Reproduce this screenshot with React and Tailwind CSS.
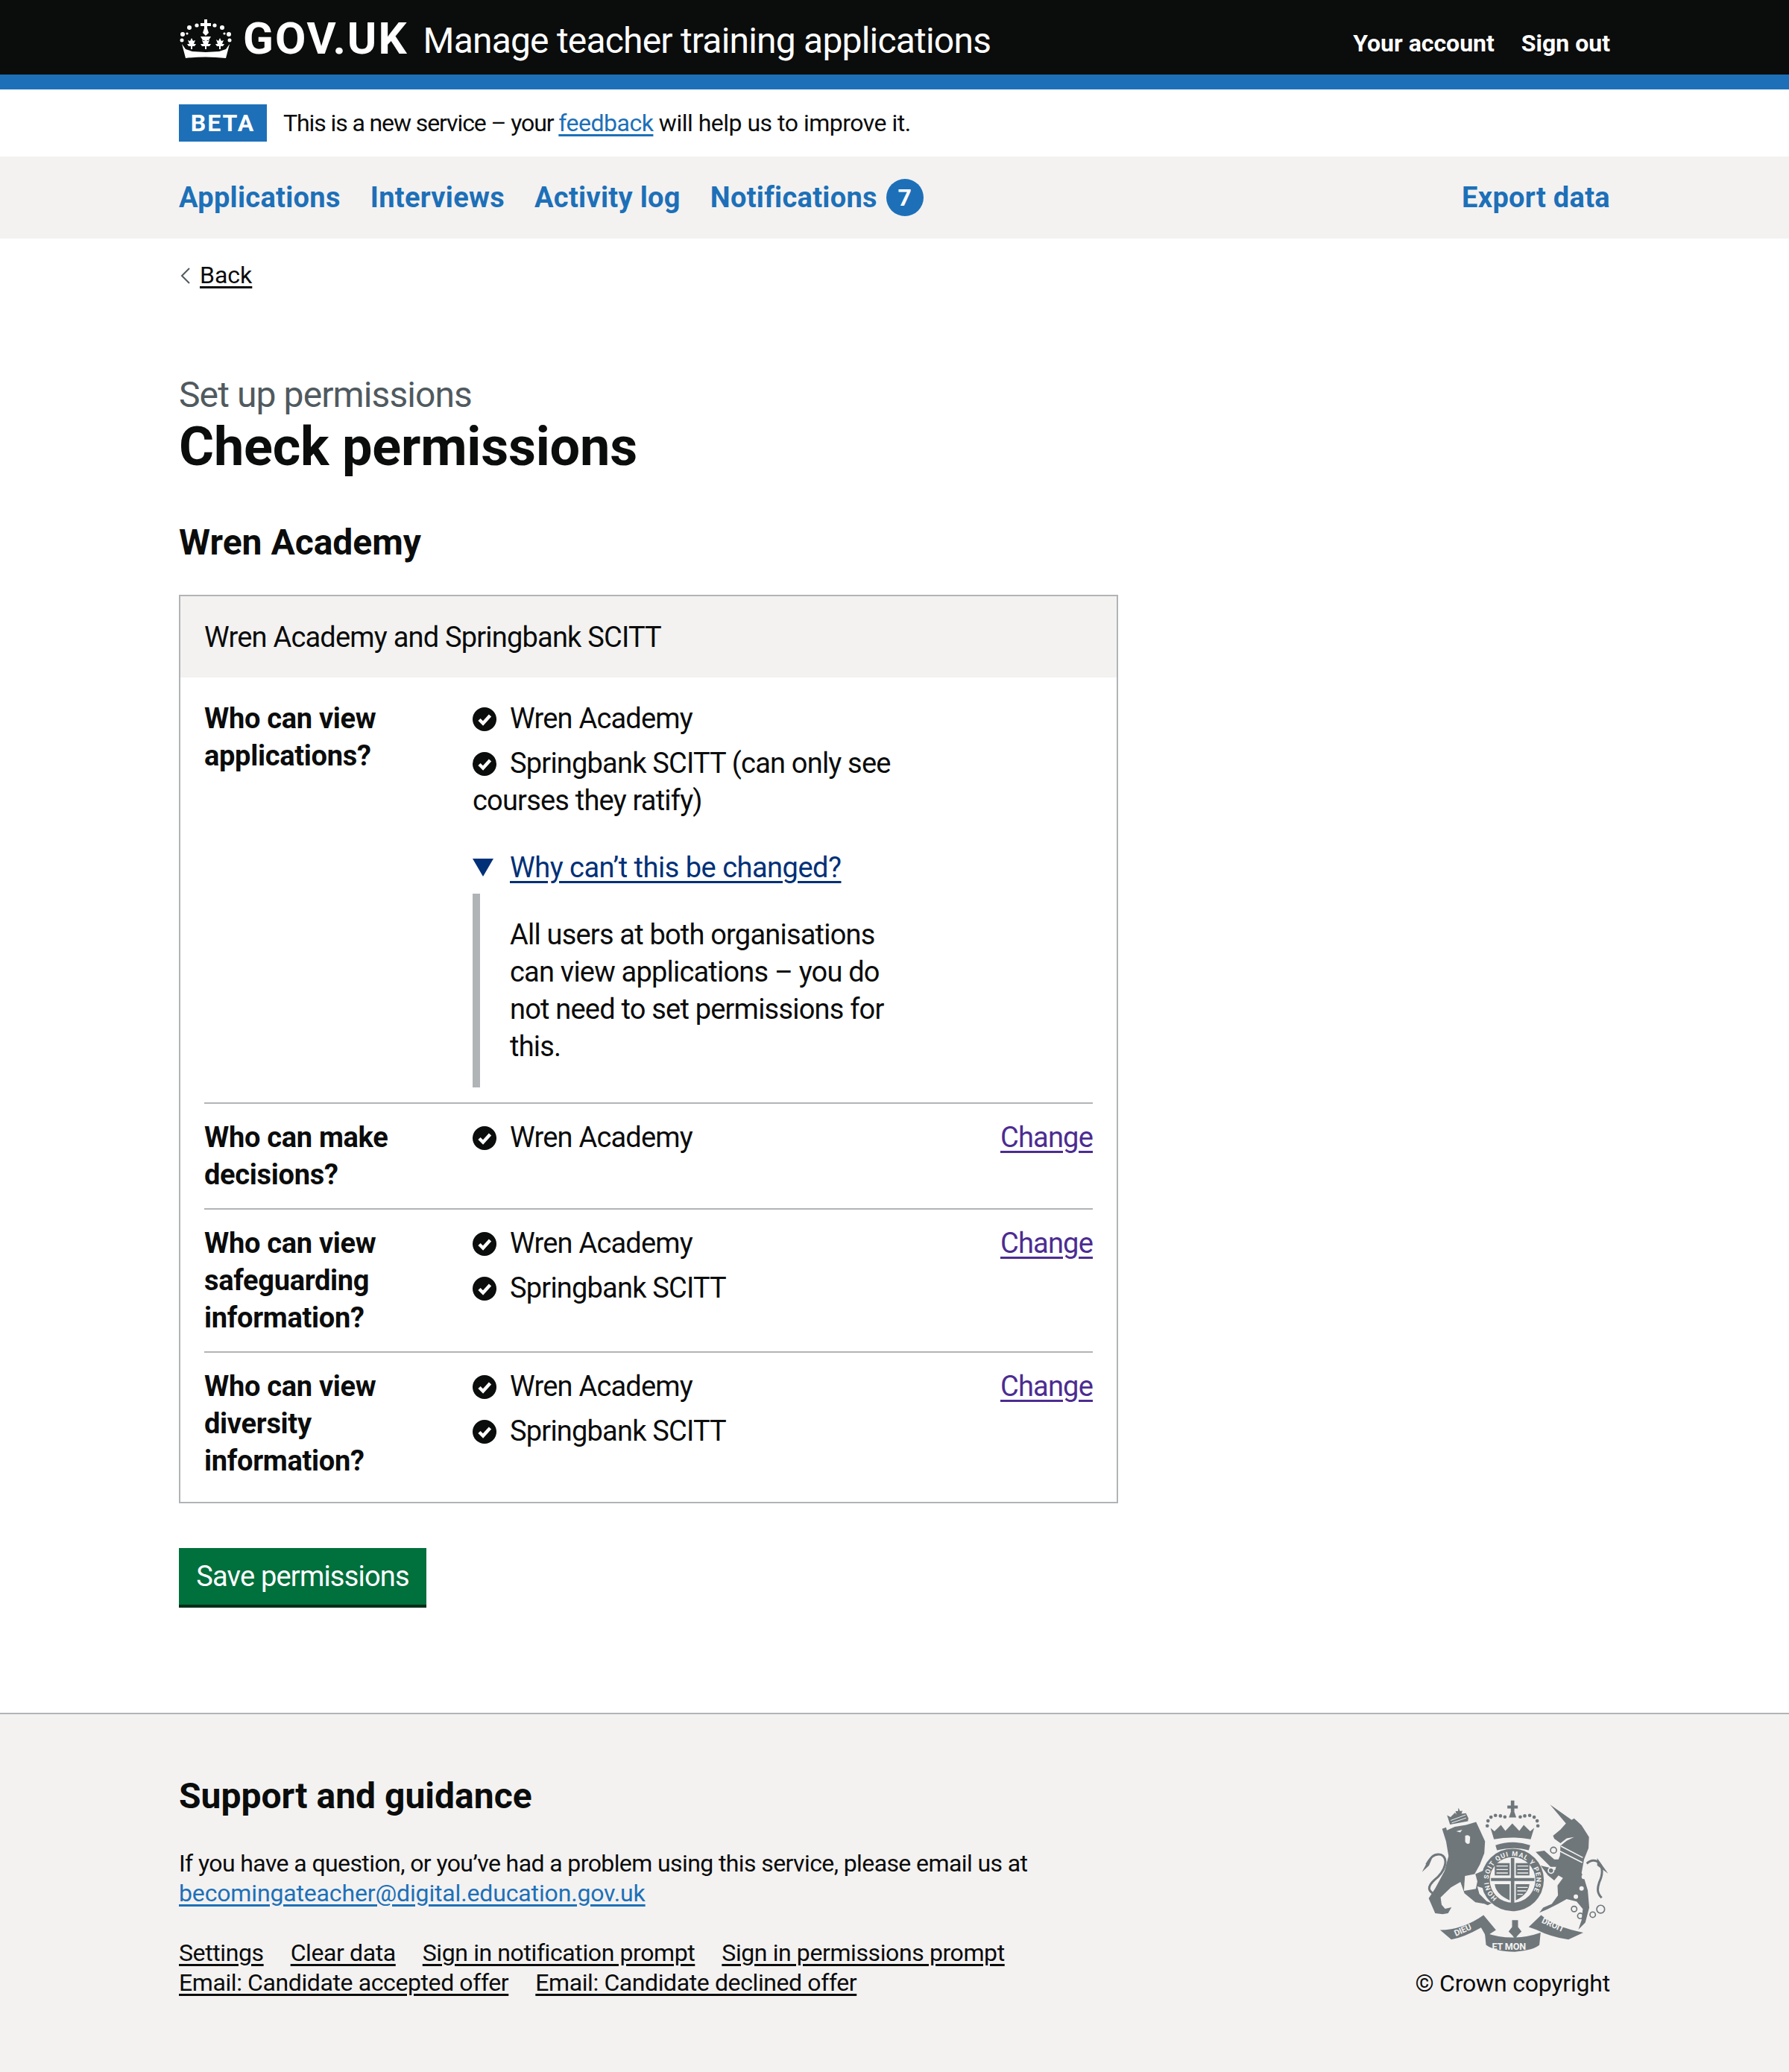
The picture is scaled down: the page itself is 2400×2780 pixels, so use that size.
import React from 'react';

const font = { fontFamily: 'Roboto, sans-serif' };

const Crown = () => (
  <svg viewBox="0 0 72 52" className="w-[72px] h-[52px] fill-white">
    <path d="M34 0h4v5h5v4h-5v3l2 6-4 4-4-4 2-6V9h-5V5h5z" />
    <circle cx="24" cy="8" r="2.6" /><circle cx="48" cy="8" r="2.6" />
    <circle cx="14" cy="11" r="3" /><circle cx="58" cy="11" r="3" />
    <circle cx="5" cy="20" r="3" /><circle cx="67" cy="20" r="3" />
    <circle cx="4" cy="28" r="2.5" /><circle cx="68" cy="28" r="2.5" />
    <circle cx="11" cy="19" r="1.6" /><circle cx="61" cy="19" r="1.6" />
    <path d="M29 23h14l-3 5h-8z" />
    <path d="M36 25l2 4 3-1-2 5h4l-2 3h-4v4h-2v-4h-4l-2-3h4l-2-5 3 1z" />
    <path d="M17 25l2 4 3-1-2 5h3l-2 3h-3v4h-2v-4h-3l-2-3h3l-2-5 3 1z" />
    <path d="M55 25l2 4 3-1-2 5h3l-2 3h-3v4h-2v-4h-3l-2-3h3l-2-6 3 2z" />
    <path d="M4 33l5 7 9 3 18 1 18-1 9-3 5-7-5 19q-27-3-54 0z" />
  </svg>
);

const RoyalArms = () => (
  <svg viewBox="130 100 760 630" className="w-[253px] h-[210px] fill-[#6f777b]">
    {/* lion */}
    <path d="M232 228l32-14 46-8 40-12 14 30 22 48-3 48-18 46-22 40 36-16 26 30 14 32-12 6-14-12-10 16-28-8 8 30 30 30 20 8-16 8-14-6-36-6-44-36-16-46-38 22-42 40 4 30 14 16 26-6-14 24-22 4-30-4-26-60 26-40 38-70 16-60-10-60-16-50 16-6z" />
    <path d="M305 412l42-8 8 30-6 30-48 8z" className="fill-[#f3f2f1]" />
    <path d="M196 490c-44-14-44-34-14-62 46-36 58-88 26-102-30-6-42 14-58 40" fill="none" stroke="#6f777b" strokeWidth="9" />
    <path d="M132 396l18-34 22-20-12 28z" />
    <path d="M306 250q12-6 20 4l-2 26q-12 8-18-6z" className="fill-[#f3f2f1]" />
    <path d="M270 232l24-6-8 10z" className="fill-[#f3f2f1]" />
    <path d="M245 205l-12-38 14 8 18-18 6 8-4-14 10 0 2-14 6 14 10-2-4 12 18-2 10 20 -2 12z" />
    <path d="M248 188l60-22M252 198l58-20" fill="none" stroke="#f3f2f1" strokeWidth="3" />
    {/* crown */}
    <path d="M490 108h14v20h14v12h-14v14l8 22h-30l8-22v-14h-14v-12h14z" />
    <path d="M422 264l-14-46 16 14 26-26 18 24 28-30 28 30 18-24 26 26 16-14-14 46q-74-14-148 0z" />
    <path d="M428 288q70-24 140 0l-6 20q-64-16-128 0z" />
    {[[395, 210], [398, 190], [410, 175], [428, 168], [448, 170], [466, 174], [528, 174], [546, 170], [566, 168], [584, 175], [596, 190], [599, 210]].map(([x, y]) => (
      <circle key={x} cx={x} cy={y} r="7" />
    ))}
    {/* garter and shield */}
    <circle cx="497" cy="428" r="126" />
    <circle cx="497" cy="428" r="92" className="fill-[#f3f2f1]" />
    <path d="M490 340h14v195h-14zM410 420h175v12H410z" />
    <path d="M425 360h60v50h-60zM510 360h55v50h-55zM425 445q4 40 60 65v-65zM510 445h55q-4 40-55 65z" />
    <path d="M432 372h46M432 386h46M432 400h46M516 372h44M516 386h44M516 400h44M516 458h42M516 472h36M516 486h22" fill="none" stroke="#f3f2f1" strokeWidth="4" />
    <defs>
      <path id="garterRing" d="M435 501a96 96 0 1 1 124 0" />
    </defs>
    <text className="fill-[#f3f2f1]" style={{ font: '700 27px Roboto, sans-serif' }}>
      <textPath href="#garterRing" textLength="430" lengthAdjust="spacing">HONI SOIT QUI MAL Y PENSE</textPath>
    </text>
    {/* unicorn */}
    <path d="M648 124l87 62 10-6 30 28 30 47-2 45-18 45-10 55 10 20 15 50 6 70-16 60-28 28 13-38 5-45-25-30-40-10-35 20-40 20-35 15 15-20 35-15 25-35-2-40 22-30-35-20 15-50 8-20 2-40 25-20 30-15-30 5-25 20-25-18-5-12 30-25 22-25z" />
    <path d="M590 315l35-5 40 35h25v30h-40l-30-30zM610 370l40 10 40 20-25 30-25-20z" />
    <path d="M692 292l88 46M688 312l90 46" fill="none" stroke="#f3f2f1" strokeWidth="5" />
    <circle cx="752" cy="495" r="9" className="fill-[#f3f2f1]" />
    <circle cx="775" cy="462" r="9" className="fill-[#f3f2f1]" />
    <circle cx="785" cy="415" r="10" className="fill-[#f3f2f1]" />
    <path d="M796 362c34-34 84 6 50 76-10 30-6 46 10 62" fill="none" stroke="#6f777b" strokeWidth="9" />
    <path d="M838 340l44 62-44-32z" />
    <circle cx="662" cy="308" r="12" fill="none" stroke="#6f777b" strokeWidth="5" />
    <circle cx="652" cy="390" r="11" fill="none" stroke="#f3f2f1" strokeWidth="5" />
    <circle cx="745" cy="545" r="11" fill="none" stroke="#6f777b" strokeWidth="5" />
    <circle cx="770" cy="573" r="11" fill="none" stroke="#6f777b" strokeWidth="5" />
    <circle cx="820" cy="568" r="11" fill="none" stroke="#6f777b" strokeWidth="5" />
    <circle cx="852" cy="546" r="16" fill="none" stroke="#6f777b" strokeWidth="5" />
    {/* ribbon */}
    <path d="M205 630q90 0 175-60l50 60-40 25-20-35q-70 40-120 48z" />
    <path d="M385 640q110 40 225 0l-5 50q-20 20-100 28-80-2-115-28z" />
    <path d="M612 570q60 50 170 70l-60 28q-70-10-130-40l-30-10z" />
    <path d="M495 590h24v28l14 18-16 16-10 14-10-14-16-16 14-18z" />
    <text x="268" y="655" transform="rotate(-24 268 655)" className="fill-[#f3f2f1]" style={{ font: '700 34px Roboto, sans-serif' }}>DIEU</text>
    <text x="414" y="708" className="fill-[#f3f2f1]" style={{ font: '700 38px Roboto, sans-serif' }}>ET MON</text>
    <text x="612" y="600" transform="rotate(24 612 600)" className="fill-[#f3f2f1]" style={{ font: '700 34px Roboto, sans-serif' }}>DROIT</text>
  </svg>
);

const Tick = () => (
  <svg viewBox="0 0 32 32" className="inline-block w-8 h-8 mr-[18px] align-[-4px]">
    <circle cx="16" cy="16" r="16" fill="#0b0c0c" />
    <path d="M9 16.5l5 5 9.5-10.5" fill="none" stroke="#fff" strokeWidth="4.5" />
  </svg>
);

const Item = ({ children }) => (
  <li className="mb-2.5">
    <Tick />
    {children}
  </li>
);

const Row = ({ title, items, change, bottom }) => (
  <div className={`flex mx-8 ${bottom ? 'pt-5 pb-[30px]' : 'py-5 border-b-2 border-[#b1b4b6]'}`}>
    <div className="w-[360px] font-bold tracking-[-0.3px]">{title}</div>
    <ul className="flex-1 -mb-2.5">
      {items.map((i) => <Item key={i}>{i}</Item>)}
    </ul>
    {change && <a href="#" className="underline text-[#4c2c92] underline-offset-[5px]">Change</a>}
  </div>
);

export default function App() {
  return (
    <div style={font} className="text-[#0b0c0c] text-[38px] leading-[50px] tracking-[-0.8px] bg-white">
      <header className="bg-[#0b0c0c] border-b-[20px] border-[#1d70b8] h-[120px]">
        <div className="mx-[240px] flex items-start justify-between h-[100px]">
          <div className="flex items-center pt-[21px]">
            <Crown />
            <span className="font-bold text-white text-[60px] leading-[56px] tracking-[2px] ml-[14px] -mt-px">GOV.UK</span>
            <span className="text-white text-[48px] leading-[56px] ml-5 mt-[6px]">Manage teacher training applications</span>
          </div>
          <div className="flex gap-9 text-white font-bold text-[32px] leading-10 tracking-normal pt-[38px]">
            <a href="#">Your account</a>
            <a href="#">Sign out</a>
          </div>
        </div>
      </header>

      <div className="h-[90px] mx-[240px] flex items-center gap-[22px] text-[32px] tracking-[-0.5px]">
        <strong className="bg-[#1d70b8] text-white tracking-[2px] h-[50px] w-[118px] flex items-center justify-center">BETA</strong>
        <span><span className="tracking-[-1.1px]">This is a new service – your </span><a href="#" className="text-[#1d70b8] underline underline-offset-4">feedback</a> will help us to improve it.</span>
      </div>

      <nav className="bg-[#f3f2f1] h-[110px]">
        <div className="mx-[240px] h-full flex items-center justify-between font-bold text-[#1d70b8] tracking-[0.3px]">
          <div className="flex items-center gap-10">
            <a href="#">Applications</a>
            <a href="#">Interviews</a>
            <a href="#">Activity log</a>
            <a href="#" className="flex items-center gap-3">
              Notifications
              <span className="w-[50px] h-[50px] rounded-full bg-[#1d70b8] text-white text-[32px] flex items-center justify-center">7</span>
            </a>
          </div>
          <a href="#">Export data</a>
        </div>
      </nav>

      <main className="mx-[240px] pb-[145px]">
        <div className="pt-[29px] h-[180px] flex items-start text-[32px] leading-10 tracking-normal">
          <svg viewBox="0 0 14 22" className="w-[14px] h-[22px] mt-2.5 mr-3 ml-0.5">
            <path d="M12 1L2 11l10 10" fill="none" stroke="#505a5f" strokeWidth="2" />
          </svg>
          <a href="#" className="underline underline-offset-4">Back</a>
        </div>
        <div className="text-[48px] leading-[60px] tracking-[-0.9px] text-[#505a5f]">Set up permissions</div>
        <h1 className="font-bold text-[72px] leading-[80px] tracking-[-0.2px] mb-[58px]">Check permissions</h1>
        <h2 className="font-bold text-[48px] leading-[60px] tracking-normal mb-10">Wren Academy</h2>

        <div className="w-[1260px] border-2 border-[#b1b4b6]">
          <div className="bg-[#f3f2f1] h-[109px] px-8 flex items-center">Wren Academy and Springbank SCITT</div>

          <div className="flex mx-8 pt-[30px] pb-5 border-b-2 border-[#b1b4b6]">
            <div className="w-[360px] font-bold tracking-[-0.3px]">Who can view<br />applications?</div>
            <div className="w-[600px]">
              <ul>
                <Item>Wren Academy</Item>
                <Item>Springbank SCITT (can only see courses they ratify)</Item>
              </ul>
              <div className="mt-10 flex items-center gap-[22px] text-[#003078] tracking-[-0.5px]">
                <svg viewBox="0 0 28 24" className="w-7 h-6"><path d="M0 0h28L14 24z" fill="#003078" /></svg>
                <a href="#" className="underline underline-offset-[5px]">Why can’t this be changed?</a>
              </div>
              <div className="mt-2.5 border-l-[10px] border-[#b1b4b6] pl-10 py-[30px] pr-10">
                All users at both organisations can view applications – you do not need to set permissions for this.
              </div>
            </div>
          </div>

          <Row title={<>Who can make<br />decisions?</>} items={['Wren Academy']} change />
          <Row title={<>Who can view<br />safeguarding<br />information?</>} items={['Wren Academy', 'Springbank SCITT']} change />
          <Row title={<>Who can view<br />diversity<br />information?</>} items={['Wren Academy', 'Springbank SCITT']} change bottom />
        </div>

        <button className="mt-[60px] bg-[#00703c] text-white h-[76px] w-[332px] shadow-[0_4px_0_#002d18]">Save permissions</button>
      </main>

      <footer className="bg-[#f3f2f1] border-t-2 border-[#b1b4b6] h-[484px] text-[32px] leading-10 tracking-[-0.6px]">
        <div className="mx-[240px] flex justify-between pt-20">
          <div>
            <h2 className="font-bold text-[48px] leading-[60px] tracking-normal mb-[40px]">Support and guidance</h2>
            <p>If you have a question, or you’ve had a problem using this service, please email us at<br />
              <a href="#" className="text-[#1d70b8] underline underline-offset-4 tracking-[-0.15px]">becomingateacher@digital.education.gov.uk</a>
            </p>
            <div className="mt-10 flex flex-wrap gap-x-9 w-[1200px] tracking-[-0.4px]">
              {['Settings', 'Clear data', 'Sign in notification prompt', 'Sign in permissions prompt'].map((l) => (
                <a key={l} href="#" className="underline underline-offset-4">{l}</a>
              ))}
              <div className="basis-full h-0" />
              {['Email: Candidate accepted offer', 'Email: Candidate declined offer'].map((l) => (
                <a key={l} href="#" className="underline underline-offset-4">{l}</a>
              ))}
            </div>
          </div>
          <div className="flex flex-col items-end pt-[33px]">
            <RoyalArms />
            <span className="mt-[18px] tracking-[-0.2px]">© Crown copyright</span>
          </div>
        </div>
      </footer>
    </div>
  );
}
